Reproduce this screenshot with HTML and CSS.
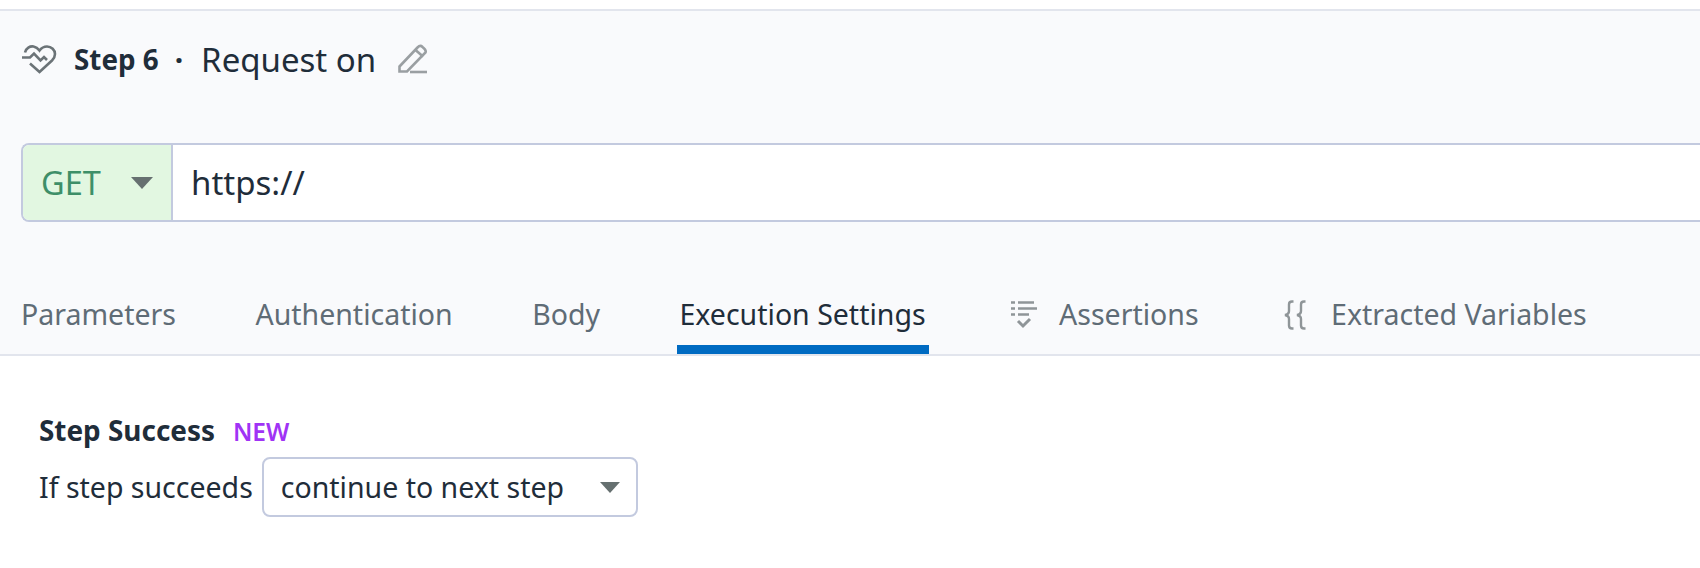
FILE: index.html
```html
<!DOCTYPE html>
<html lang="en">
<head>
<meta charset="utf-8">
<title>Step 6</title>
<link rel="stylesheet" href="styles.css">
</head>
<body>
<div class="top-gap"></div>
<section class="header">
  <div class="title-row">
    <svg class="heart" width="36" height="32" viewBox="0 0 36 32" fill="none" stroke="#6b7377" stroke-width="2.6">
      <path d="M4 9.500C5 5 9 3 12.500 3.500C15 4 17 5.500 18.500 7.500C20 5.500 22.500 3.500 26 3.500C30.500 3.500 34 7 34 11C34 13.500 33 15.500 31 17.500L18.500 29L9 20.500"/>
      <path d="M1 14.500H9L13 10.500L19.500 17.500L23 14L26 17"/>
    </svg>
    <span class="step">Step 6</span>
    <span class="dot">·</span>
    <span class="name">Request on</span>
    <svg class="pencil" width="32" height="32" viewBox="0 0 32 32" fill="none" stroke="#9a9fa2" stroke-width="2.6">
      <path d="M2.500 23.500L20.500 4.500C22 3 24 2.500 25.500 4C28 6 29.500 7.500 28.500 9.500L10 28.500H2.500Z"/>
      <path d="M18.500 7L26 13.500"/>
      <path d="M13 29H30"/>
    </svg>
  </div>
  <div class="url-bar">
    <div class="method"><span class="method-label">GET</span><span class="caret caret-method"></span></div>
    <div class="url">https://</div>
  </div>
  <nav class="tabs">
    <a class="tab">Parameters</a>
    <a class="tab">Authentication</a>
    <a class="tab">Body</a>
    <a class="tab active">Execution Settings</a>
    <a class="tab">
      <svg class="tab-icon" width="28" height="30" viewBox="0 0 28 30" fill="none" stroke="#8f9598" stroke-width="2.600">
        <path d="M1 2.500H5M8 2.500H24M1 8.500H5M8 8.500H27M1 14.500H5M8 14.500H19"/>
        <path d="M8 21L13 26L20 19" stroke-width="3"/>
      </svg>Assertions</a>
    <a class="tab">
      <svg class="tab-icon braces" width="24" height="30" viewBox="0 0 24 30" fill="none" stroke="#8f9598" stroke-width="2.400">
        <path d="M10.500 1.500H9C7 1.500 6 2.500 6 4.500V11C6 13 4.500 14.500 2 15C4.500 15.500 6 17 6 19V25.500C6 27.500 7 28.500 9 28.500H10.500"/>
        <path d="M22.500 1.500H21C19 1.500 18 2.500 18 4.500V11C18 13 16.500 14.500 14 15C16.500 15.500 18 17 18 19V25.500C18 27.500 19 28.500 21 28.500H22.500"/>
      </svg>Extracted Variables</a>
  </nav>
</section>
<main class="content">
  <div class="section-title"><span class="strong">Step Success</span><span class="new">NEW</span></div>
  <div class="field">
    <label class="field-label">If step succeeds</label>
    <div class="select"><span>continue to next step</span><span class="caret caret-select"></span></div>
  </div>
</main>
</body>
</html>
```
FILE: styles.css
```css
* { box-sizing: border-box; }
html, body { margin: 0; padding: 0; background: #fff; }
body {
  width: 1700px;
  height: 568px;
  overflow: hidden;
  font-family: "Noto Sans", sans-serif;
  color: #1f2d3a;
}
.top-gap { height: 9px; }
.header {
  background: #f9fafc;
  border-top: 2px solid #e2e5ed;
  border-bottom: 2px solid #e2e5ed;
  height: 347px;
  padding: 0 0 0 21px;
}
.title-row {
  display: flex;
  align-items: center;
  height: 96px;
}
.heart { margin-right: 17px; }
.step { font-size: 27.800px; font-weight: 700; }
.dot { font-size: 30px; font-weight: 700; margin: 0 18px 0 16px; }
.name { font-size: 33px; }
.pencil { margin-left: 21px; }
.url-bar {
  display: flex;
  height: 79px;
  margin-top: 36px;
  background: #fff;
  border: 2px solid #c3cadf;
  border-right: 0;
  border-radius: 8px 0 0 8px;
}
.method {
  width: 150px;
  display: flex;
  align-items: center;
  padding-left: 18px;
  background: #e2f7e1;
  border-right: 2px solid #c3cadf;
  border-radius: 6px 0 0 6px;
}
.method-label { font-size: 32.500px; color: #3e8f68; width: 90px; }
.caret {
  width: 0; height: 0;
  border-left: 11px solid transparent;
  border-right: 11px solid transparent;
  border-top: 12px solid #667070;
}
.url { font-size: 33px; padding: 0 0 0 18px; line-height: 75px; }
.tabs {
  display: flex;
  gap: 79.500px;
  margin-top: 64px;
  height: 68px;
}
.tab {
  font-size: 28.500px;
  line-height: 44px;
  color: #5f6c76;
  display: flex;
  align-items: flex-start;
  height: 68px;
  padding-top: 6px;
  position: relative;
}
.tab.active { color: #1f2d3a; }
.tab.active::after {
  content: "";
  position: absolute;
  left: -3px; right: -3px;
  bottom: 0;
  height: 9px;
  background: #006bc2;
}
.tab-icon { margin: 8px 21px 0 5px; flex: none; }
.tab-icon.braces { margin: 8px 24px 0 5px; }
.content { padding: 55px 0 0 39px; }
.section-title { display: flex; align-items: baseline; }
.strong { font-size: 27.900px; font-weight: 700; }
.new { font-size: 24.500px; font-weight: 600; color: #a033f5; margin-left: 18px; }
.field { display: flex; align-items: center; margin-top: 8px; }
.field-label { font-size: 28.500px; margin-right: 9px; }
.select {
  width: 376px;
  height: 60px;
  display: flex;
  align-items: center;
  justify-content: space-between;
  padding: 0 17px 0 17px;
  border: 2px solid #c3cadf;
  border-radius: 8px;
  font-size: 28.500px;
  background: #fff;
}
.caret-select { border-left-width: 10px; border-right-width: 10px; border-top-width: 11px; margin-right: -1px; }
```
